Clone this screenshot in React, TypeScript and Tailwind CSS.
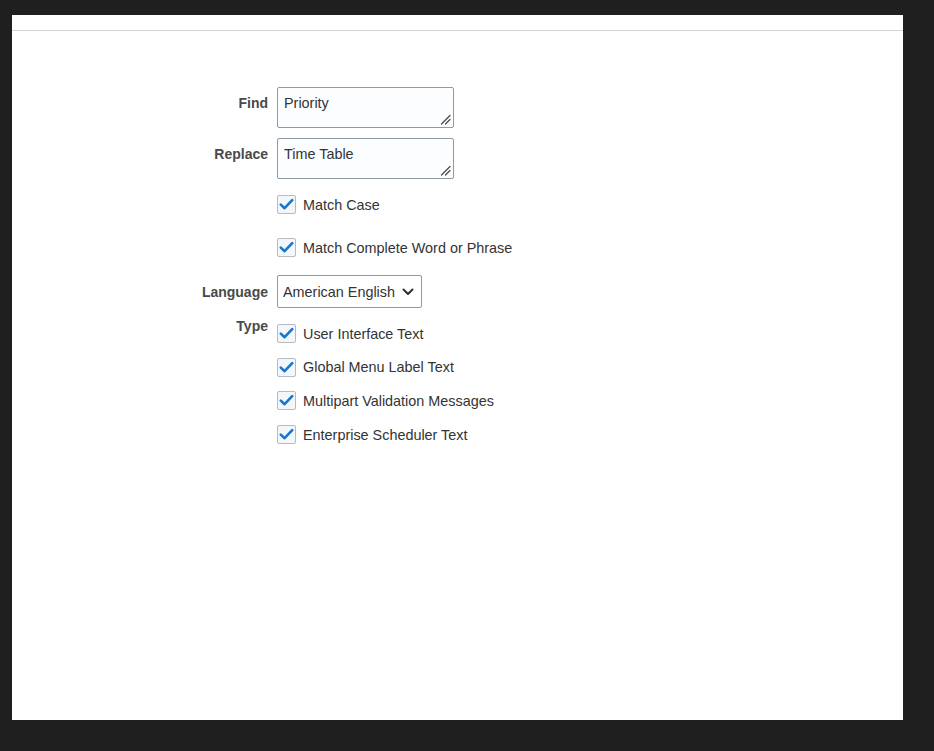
import React from "react";

function Check({ label }: { label: string }) {
  return (
    <div className="flex items-center h-[19px]">
      <span className="w-[19px] h-[19px] rounded-[2px] border border-[#b3bcc4] bg-[#f3f7fa] flex items-center justify-center shrink-0">
        <svg width="15" height="13" viewBox="0 0 15 13" fill="none">
          <path d="M1.8 6.6 L5.6 10.2 L13.2 2.2" stroke="#1577d2" strokeWidth="2.6" strokeLinecap="round" strokeLinejoin="round" />
        </svg>
      </span>
      <span className="ml-[7px] text-[14.4px] leading-[16px] text-[#333333]">{label}</span>
    </div>
  );
}

function Label({ children, className = "" }: { children: React.ReactNode; className?: string }) {
  return (
    <div className={"w-[265px] pr-[9px] text-right font-bold text-[14px] leading-[16px] text-[#4a4a4a] shrink-0 " + className}>
      {children}
    </div>
  );
}

function Area({ value }: { value: string }) {
  return (
    <div className="relative w-[177px] h-[41px]">
      <textarea
        defaultValue={value}
        className="block w-full h-full resize-none border border-[#8c9ba5] rounded-[2px] bg-[#fbfdff] px-[6px] pt-[7px] text-[14.4px] leading-[16px] text-[#333333] outline-none"
        style={{ fontFamily: '"Liberation Sans", Arial, sans-serif' }}
      />
      <svg className="absolute right-[3px] bottom-[3px] pointer-events-none" width="11" height="11" viewBox="0 0 11 11" fill="none">
        <path d="M1.5 10 L10 1.5" stroke="#4a4a4a" strokeWidth="1.2" strokeLinecap="round" />
        <path d="M5.5 10 L10 5.5" stroke="#4a4a4a" strokeWidth="1.2" strokeLinecap="round" />
      </svg>
    </div>
  );
}

export default function App() {
  return (
    <div
      className="min-h-[751px] w-full bg-[#1f1f1f] pt-[15px] pl-[12px]"
      style={{ fontFamily: '"Liberation Sans", Arial, sans-serif' }}
    >
      <div className="w-[891px] h-[705px] bg-white">
        <div className="h-[16px] border-b border-[#d4d4d4]" />
        <div className="pt-[56px]">
          <div className="flex">
            <Label className="pt-[8px]">Find</Label>
            <Area value="Priority" />
          </div>
          <div className="flex mt-[10px]">
            <Label className="pt-[8px]">Replace</Label>
            <Area value="Time Table" />
          </div>
          <div className="flex mt-[16px]">
            <Label>{""}</Label>
            <Check label="Match Case" />
          </div>
          <div className="flex mt-[24px]">
            <Label>{""}</Label>
            <Check label="Match Complete Word or Phrase" />
          </div>
          <div className="flex items-center mt-[18px]">
            <Label>Language</Label>
            <div className="w-[145px] h-[33px] border border-[#8c9ba5] rounded-[2px] bg-white flex items-center pl-[5px] pr-[7px] justify-between">
              <span className="text-[14.4px] leading-[16px] text-[#333333]">American English</span>
              <svg width="12" height="8" viewBox="0 0 12 8" fill="none">
                <path d="M1.5 1.5 L6 6 L10.5 1.5" stroke="#333333" strokeWidth="2" strokeLinecap="round" strokeLinejoin="round" />
              </svg>
            </div>
          </div>
          <div className="flex mt-[9px]">
            <Label className="pt-[1px]">Type</Label>
            <div className="flex flex-col pt-[7px] gap-[14.7px]">
              <Check label="User Interface Text" />
              <Check label="Global Menu Label Text" />
              <Check label="Multipart Validation Messages" />
              <Check label="Enterprise Scheduler Text" />
            </div>
          </div>
        </div>
      </div>
    </div>
  );
}
